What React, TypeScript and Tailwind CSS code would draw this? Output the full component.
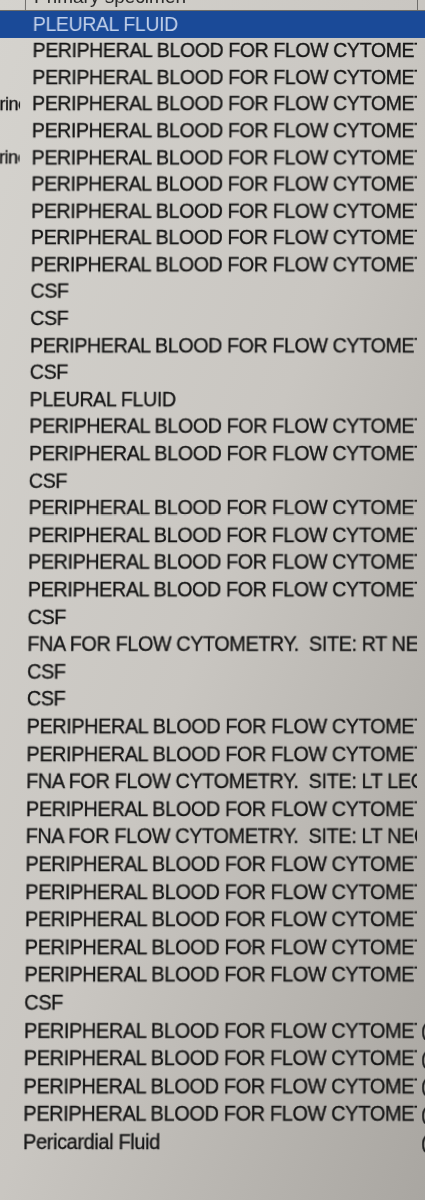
import React from "react";

const PB = "PERIPHERAL BLOOD FOR FLOW CYTOMETRY";

type Row = { text: string; left?: string; right?: string };

const rows: Row[] = [
  { text: "PLEURAL FLUID" },
  { text: PB },
  { text: PB },
  { text: PB, left: "Urine" },
  { text: PB },
  { text: PB, left: "Urine" },
  { text: PB },
  { text: PB },
  { text: PB },
  { text: PB },
  { text: "CSF" },
  { text: "CSF" },
  { text: PB },
  { text: "CSF" },
  { text: "PLEURAL FLUID" },
  { text: PB },
  { text: PB },
  { text: "CSF" },
  { text: PB },
  { text: PB },
  { text: PB },
  { text: PB },
  { text: "CSF" },
  { text: "FNA FOR FLOW CYTOMETRY.  SITE: RT NECK" },
  { text: "CSF" },
  { text: "CSF" },
  { text: PB },
  { text: PB },
  { text: "FNA FOR FLOW CYTOMETRY.  SITE: LT LEG" },
  { text: PB },
  { text: "FNA FOR FLOW CYTOMETRY.  SITE: LT NECK" },
  { text: PB },
  { text: PB },
  { text: PB },
  { text: PB },
  { text: PB },
  { text: "CSF" },
  { text: PB, right: "(" },
  { text: PB, right: "(" },
  { text: PB, right: "(" },
  { text: PB, right: "(" },
  { text: "Pericardial Fluid", right: "(" },
];

export default function App() {
  return (
    <div
      className="w-[425px] h-[1200px] overflow-hidden bg-linear-to-br from-[#d5d3ce] via-[#c9c6c1] to-[#a9a6a1] text-[#141414] [perspective:2000px] [perspective-origin:417px_0px]"
      style={{ fontFamily: '"Liberation Sans", Arial, sans-serif' }}
    >
      <div className="origin-top [transform:rotateX(2.6deg)]">
        {/* header */}
        <div className="flex h-[11px] border-b border-[#6f6d6a] overflow-hidden">
          <div className="w-[26px] shrink-0 border-r border-[#6f6d6a]" />
          <div className="w-[392px] shrink-0 border-r border-[#6f6d6a] overflow-hidden pl-[8px]">
            <div className="-mt-[13px] text-[19px] leading-[20px] whitespace-nowrap text-[#2a2a2a]">
              Primary specimen
            </div>
          </div>
          <div className="flex-1" />
        </div>
        {rows.map((r, i) => {
          const sel = i === 0;
          return (
            <div
              key={i}
              className={`flex h-[26.6px] items-center text-[19.5px] leading-none whitespace-pre ${
                sel
                  ? "bg-[#1a4a98] text-[#c3d1ea]"
                  : "[-webkit-text-stroke:0.3px_#141414]"
              }`}
            >
              <div className="w-[21px] shrink-0 overflow-hidden">
                {r.left ? (
                  <span className="block -ml-[12px] text-[18px] tracking-[-0.5px]">{r.left}</span>
                ) : null}
              </div>
              <div className="w-[396px] shrink-0 overflow-hidden pl-[12px] tracking-[-0.38px]">
                {r.text}
              </div>
              <div className="flex-1 overflow-hidden pl-[4px] text-[18px]">{r.right ?? ""}</div>
            </div>
          );
        })}
      </div>
    </div>
  );
}
